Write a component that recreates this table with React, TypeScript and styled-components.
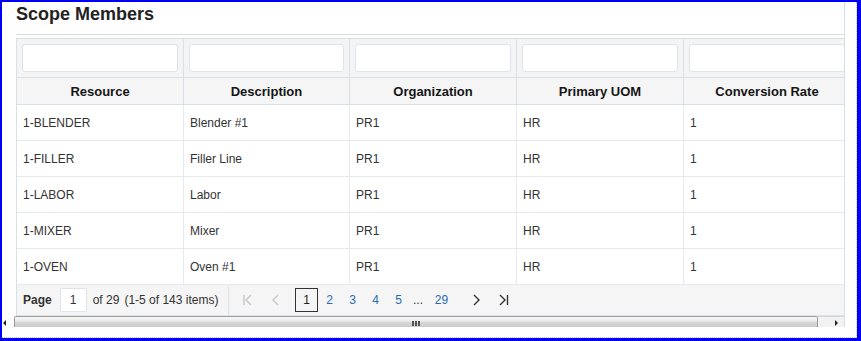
import styled, { createGlobalStyle } from "styled-components";

const GlobalStyle = createGlobalStyle`
  html, body { margin: 0; padding: 0; background: #fff; }
  body { font-family: "Liberation Sans", Arial, sans-serif; }
  * { box-sizing: border-box; }
`;

const COLUMNS = "167px 166px 167px 167px 167px";

const headers = ["Resource", "Description", "Organization", "Primary UOM", "Conversion Rate"];

const rows = [
  ["1-BLENDER", "Blender #1", "PR1", "HR", "1"],
  ["1-FILLER", "Filler Line", "PR1", "HR", "1"],
  ["1-LABOR", "Labor", "PR1", "HR", "1"],
  ["1-MIXER", "Mixer", "PR1", "HR", "1"],
  ["1-OVEN", "Oven #1", "PR1", "HR", "1"],
];

const pages = ["1", "2", "3", "4", "5"];

const Icon = ({ kind, disabled }: { kind: "first" | "prev" | "next" | "last"; disabled?: boolean }) => {
  const color = disabled ? "#c6c6c6" : "#333";
  return (
    <svg width="10" height="12" viewBox="0 0 10 12" fill="none" stroke={color} strokeWidth="1.4">
      {kind === "first" && (
        <>
          <line x1="1" y1="1" x2="1" y2="11" />
          <polyline points="8,1 3,6 8,11" />
        </>
      )}
      {kind === "prev" && <polyline points="7,1 2,6 7,11" />}
      {kind === "next" && <polyline points="3,1 8,6 3,11" />}
      {kind === "last" && (
        <>
          <polyline points="1,1 6,6 1,11" />
          <line x1="8.5" y1="1" x2="8.5" y2="11" />
        </>
      )}
    </svg>
  );
};

export default function App() {
  return (
    <>
      <GlobalStyle />
      <Frame>
        <Inner>
          <Panel>
            <TitleBar>Scope Members</TitleBar>
            <Grid>
              <FilterRow>
                {headers.map((h) => (
                  <FilterCell key={h}>
                    <FilterInput />
                  </FilterCell>
                ))}
              </FilterRow>
              <HeaderRow>
                {headers.map((h) => (
                  <HeaderCell key={h}>{h}</HeaderCell>
                ))}
              </HeaderRow>
              {rows.map((r) => (
                <DataRow key={r[0]}>
                  {r.map((c, i) => (
                    <DataCell key={i}>{c}</DataCell>
                  ))}
                </DataRow>
              ))}
              <Pager>
                <PagerInfo>
                  <PageLabel>Page</PageLabel>
                  <PageInput>1</PageInput>
                  <span>of 29</span>
                  <ItemCount>(1-5 of 143 items)</ItemCount>
                </PagerInfo>
                <PagerNav>
                  <NavButton>
                    <Icon kind="first" disabled />
                  </NavButton>
                  <NavButton>
                    <Icon kind="prev" disabled />
                  </NavButton>
                  <Pages>
                    {pages.map((p) => (
                      <PageButton key={p} $current={p === "1"}>
                        {p}
                      </PageButton>
                    ))}
                    <Ellipsis>...</Ellipsis>
                    <PageButton $wide>29</PageButton>
                  </Pages>
                  <NavButton>
                    <Icon kind="next" />
                  </NavButton>
                  <NavButton>
                    <Icon kind="last" />
                  </NavButton>
                </PagerNav>
              </Pager>
            </Grid>
            <HScroll>
              <ScrollButton $side="left" />
              <Thumb>
                <Grip />
              </Thumb>
              <ScrollButton $side="right" />
            </HScroll>
          </Panel>
        </Inner>
      </Frame>
    </>
  );
}

const Frame = styled.div`
  width: 861px;
  height: 341px;
  border-style: solid;
  border-color: #0000f4;
  border-width: 2px 4px 3px 2px;
  background: #fff;
`;

const Inner = styled.div`
  width: 855px;
  height: 336px;
  border-right: 1px dotted #b9c3d6;
  border-bottom: 1px dotted #b9c3d6;
`;

const Panel = styled.div`
  width: 843px;
  border-right: 1px solid #d5dde7;
  display: flex;
  flex-direction: column;
`;

const TitleBar = styled.div`
  margin-left: 14px;
  height: 33px;
  padding-top: 2px;
  border-bottom: 1px solid #d5dde7;
  font-size: 18px;
  line-height: 21px;
  font-weight: bold;
  color: #222;
`;

const Grid = styled.div`
  margin-left: 14px;
  margin-top: 3px;
  border-top: 1px solid #d8dfe7;
  border-left: 1px solid #d8dfe7;
  overflow: hidden;
  font-size: 12px;
`;

const RowBase = styled.div`
  display: grid;
  grid-template-columns: ${COLUMNS};
  width: 835px;
`;

const FilterRow = styled(RowBase)`
  height: 39px;
  background: #f3f4f5;
  border-bottom: 1px solid #d8dfe7;
`;

const FilterCell = styled.div`
  padding: 5px 5px;
  border-right: 1px solid #d8dfe7;
`;

const FilterInput = styled.div`
  height: 28px;
  background: #fff;
  border: 1px solid #dfe4ea;
  border-radius: 3px;
`;

const HeaderRow = styled(RowBase)`
  height: 27px;
  background: #f5f5f5;
  border-bottom: 1px solid #d8dfe7;
`;

const HeaderCell = styled.div`
  display: flex;
  align-items: center;
  justify-content: center;
  border-right: 1px solid #d8dfe7;
  font-size: 13px;
  line-height: 15px;
  font-weight: bold;
  color: #151515;
`;

const DataRow = styled(RowBase)`
  height: 36px;
  border-bottom: 1px solid #e6e9ed;
`;

const DataCell = styled.div`
  display: flex;
  align-items: center;
  padding-left: 6px;
  border-right: 1px solid #e6e9ed;
  line-height: 14px;
  color: #333;
`;

const Pager = styled.div`
  display: flex;
  align-items: stretch;
  height: 31px;
  background: #f5f5f5;
  border-bottom: 1px solid #dde3ea;
  color: #333;
`;

const PagerInfo = styled.div`
  width: 212px;
  display: flex;
  align-items: center;
  padding-left: 6px;
  border-right: 1px solid #dde3ea;
`;

const PageLabel = styled.span`
  font-weight: bold;
`;

const PageInput = styled.div`
  width: 27px;
  height: 24px;
  margin: 0 6px 0 8px;
  display: flex;
  align-items: center;
  justify-content: center;
  background: #fff;
  border: 1px solid #dfe4ea;
  border-radius: 2px;
`;

const ItemCount = styled.span`
  margin-left: 5px;
`;

const PagerNav = styled.div`
  display: flex;
  align-items: center;
  padding-left: 5px;
`;

const NavButton = styled.div`
  width: 28px;
  height: 24px;
  display: flex;
  align-items: center;
  justify-content: center;
`;

const Pages = styled.div`
  display: flex;
  align-items: center;
  margin: 0 5px 0 5px;
`;

const PageButton = styled.div<{ $current?: boolean; $wide?: boolean }>`
  width: ${(p) => (p.$wide ? 31 : 23)}px;
  height: 24px;
  display: flex;
  align-items: center;
  justify-content: center;
  color: ${(p) => (p.$current ? "#222" : "#2a6bb5")};
  border: 1px solid ${(p) => (p.$current ? "#333" : "transparent")};
`;

const Ellipsis = styled.div`
  width: 16px;
  text-align: center;
  color: #333;
`;

const HScroll = styled.div`
  display: flex;
  height: 11px;
`;

const ScrollButton = styled.div<{ $side: "left" | "right" }>`
  width: ${(p) => (p.$side === "left" ? 12 : 26)}px;
  display: flex;
  align-items: flex-end;
  padding-bottom: 1px;
  padding-left: ${(p) => (p.$side === "left" ? 1 : 17)}px;
  background: ${(p) => (p.$side === "left" ? "#fff" : "#f2f2f2")};
  border-top: 1px solid ${(p) => (p.$side === "left" ? "#fff" : "#d6d6d6")};

  &::after {
    content: "";
    width: 0;
    height: 0;
    border-top: 3px solid transparent;
    border-bottom: 3px solid transparent;
    ${(p) =>
      p.$side === "left"
        ? "border-right: 3px solid #222;"
        : "border-left: 3px solid #222;"}
  }
`;

const Thumb = styled.div`
  flex: 1;
  display: flex;
  align-items: flex-end;
  justify-content: center;
  border: 1px solid #9c9c9c;
  border-bottom: none;
  border-radius: 2px 2px 0 0;
  background: linear-gradient(#f7f7f7 0%, #ececec 35%, #d3d3d3 60%, #cdcdcd 100%);
`;

const Grip = styled.span`
  width: 8px;
  height: 5px;
  margin-bottom: 1px;
  background: repeating-linear-gradient(90deg, #555 0 2px, transparent 2px 3px);
`;
